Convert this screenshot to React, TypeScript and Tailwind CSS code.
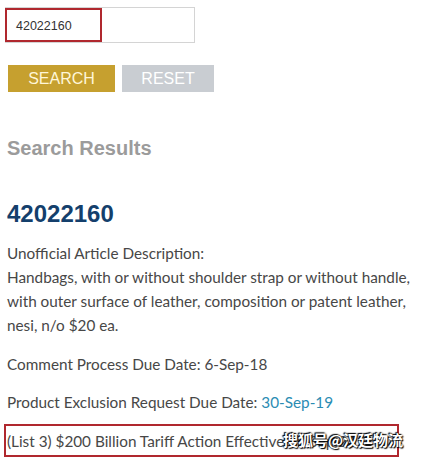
import React from "react";

const body = { fontFamily: "Lato, 'Noto Sans', sans-serif" };
const arial = { fontFamily: "'Liberation Sans', Arial, sans-serif" };

export default function App() {
  return (
    <div className="w-[421px] h-[458px] overflow-hidden bg-white relative">
      {/* Search box */}
      <div className="pt-[7px] pl-[5px]">
        <div className="w-[190px] h-[36px] border border-[#d4d4d4] bg-white relative">
          <div className="absolute left-[-1px] top-0 w-[97px] h-[34px] border-2 border-[#b0282e]" />
          <span className="absolute left-[10px] top-[9px] text-[12.5px] text-[#333]" style={arial}>
            42022160
          </span>
        </div>
      </div>

      {/* Buttons */}
      <div className="flex gap-[7px] pl-[8px] mt-[22px]" style={arial}>
        <button className="w-[107px] h-[27px] bg-[#c6a02f] text-[#fff6d8] text-[16px] leading-[27px]">
          SEARCH
        </button>
        <button className="w-[92px] h-[27px] bg-[#c9cdd2] text-white text-[16px] leading-[27px]">
          RESET
        </button>
      </div>

      {/* Results */}
      <div className="pl-[7px] pr-[4px] text-[#474747]">
        <h2 className="mt-[44px] text-[20px] leading-[24px] font-bold text-[#9b9b9b]" style={arial}>
          Search Results
        </h2>
        <h1 className="mt-[40px] text-[24px] leading-[28px] font-bold text-[#143f6c]" style={arial}>
          42022160
        </h1>
        <p className="mt-[13px] text-[15.3px] leading-[24px]" style={body}>
          Unofficial Article Description:
          <br />
          Handbags, with or without shoulder strap or without handle, with outer surface of leather,
          composition or patent leather, nesi, n/o $20 ea.
        </p>
        <p className="mt-[15px] text-[15.3px] leading-[24px]" style={body}>
          Comment Process Due Date: 6-Sep-18
        </p>
        <p className="mt-[14px] text-[15.3px] leading-[24px]" style={body}>
          Product Exclusion Request Due Date: <span className="text-[#2b8cb3]">30-Sep-19</span>
        </p>
        <div className="relative mt-[10px] -ml-[3px] w-[395px] h-[33px] border-2 border-[#b0282e]">
          <p className="pl-[1px] text-[15.3px] leading-[30px] whitespace-nowrap overflow-hidden" style={body}>
            (List 3) $200 Billion Tariff Action Effective on Sep 24
          </p>
        </div>
      </div>

      {/* Watermark */}
      <div
        className="absolute left-[283px] top-[430px] text-[15px] leading-[20px] font-bold text-white"
        style={{
          fontFamily: "'Noto Sans CJK SC', sans-serif",
          textShadow: "0 0 2px #000, 1px 1px 1px #000, -1px -1px 1px #000",
        }}
      >
        搜狐号@汉廷物流
      </div>
    </div>
  );
}
